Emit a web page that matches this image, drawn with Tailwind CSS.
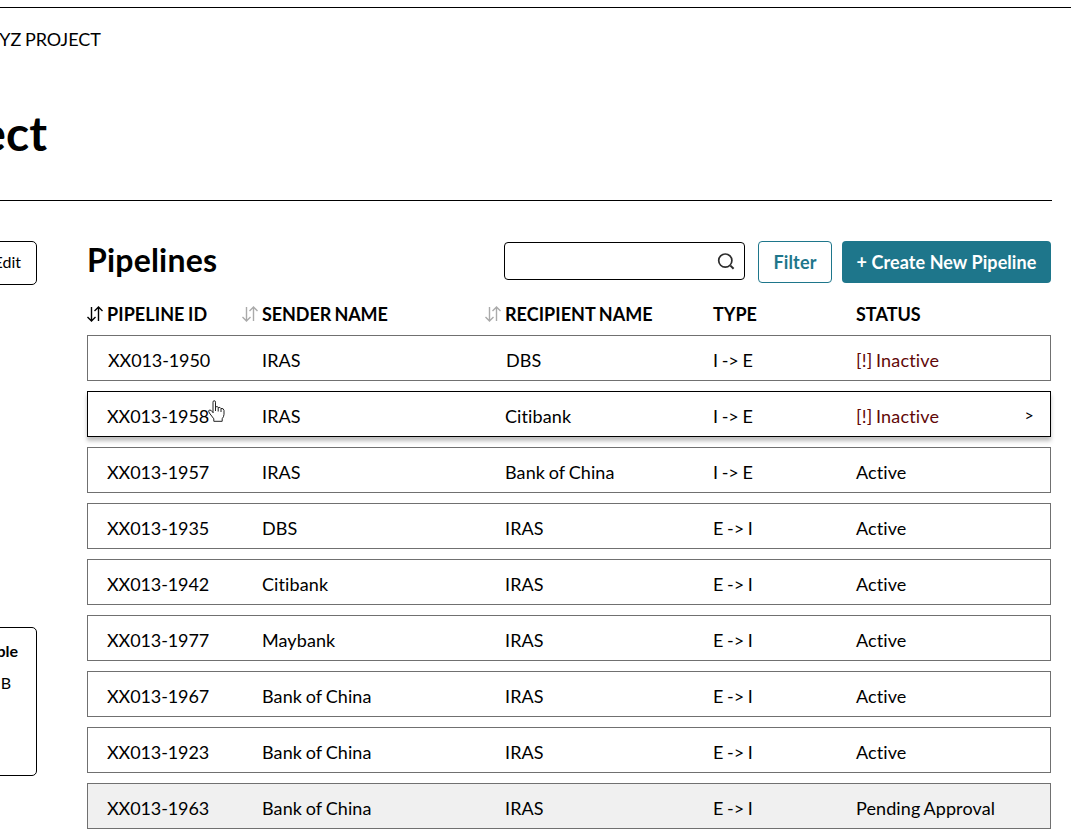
<!DOCTYPE html>
<html lang="en">
<head>
<meta charset="utf-8">
<title>Pipelines</title>
<script src="https://cdn.jsdelivr.net/npm/@tailwindcss/browser@4"></script>
</head>
<body class="bg-white text-black font-[Lato,sans-serif] text-[18px] leading-[22px] overflow-hidden [font-variant-ligatures:none] [word-spacing:-1px]">
<div class="w-[1071px] h-[836px] overflow-hidden flex flex-col whitespace-nowrap">
  <header class="mt-[7px] h-[193px] shrink-0 border-t border-black">
    <nav class="mt-5 w-[101px] flex justify-end">XYZ PROJECT</nav>
    <h1 class="mt-[54px] w-[47px] flex justify-end text-[48px] leading-[58px] font-bold">Project</h1>
  </header>
  <div class="w-[1052px] h-px shrink-0 bg-black"></div>
  <div class="mt-10 flex gap-[50px]">
    <aside class="w-[37px] shrink-0 flex flex-col items-end text-base leading-5">
      <button class="w-[74px] h-[44px] shrink-0 border border-black rounded-[5px] flex items-center justify-end pr-[15px] pb-0.5">Edit</button>
      <section class="mt-[342px] w-[300px] h-[149px] shrink-0 border border-black rounded-[5px] pr-[18px] pt-[13px] text-right">
        <div class="font-bold">Available</div>
        <div class="mt-3 pr-[7px]"><span class="[word-spacing:0]">0 B</span></div>
      </section>
    </aside>
    <main class="w-[964px] shrink-0">
      <div class="flex h-[42px]">
        <h2 class="w-[417px] text-[32px] leading-[38px] tracking-[0.2px] font-bold">Pipelines</h2>
        <div class="mt-px w-[241px] h-[38px] border border-black rounded-[4px] flex items-center justify-end pr-[9px]">
          <svg class="w-[18px] h-[18px]" viewBox="0 0 18 18" fill="none" stroke="#2b2b2b" stroke-width="1.7"><circle cx="8.3" cy="8.6" r="6.6"/><path d="M13.4 13.6l3.2 3.2" stroke-width="2"/></svg>
        </div>
        <button class="ml-[13px] w-[74px] h-[42px] border border-[#1e768b] rounded-[4px] text-[#1e768b] font-bold tracking-[0.15px]">Filter</button>
        <button class="ml-[10px] w-[209px] h-[42px] bg-[#1e768b] rounded-[4px] text-white font-bold tracking-[0.08px]">+ Create New Pipeline</button>
      </div>
      <div class="mt-5 h-[22px] grid grid-cols-[155px_243px_228px_143px_1fr] font-bold">
        <div class="flex items-center gap-1 tracking-[0.08px]"><svg class="w-4 h-4" viewBox="0 0 16 16" fill="none" stroke="#000" stroke-width="1.4"><path d="M4.5 1v14M.5 11l4 4 4-4M11.5 15v-14M7.5 5l4-4 4 4"/></svg>PIPELINE ID</div>
        <div class="flex items-center gap-1 tracking-[-0.1px]"><svg class="w-4 h-4" viewBox="0 0 16 16" fill="none" stroke="#aaa" stroke-width="1.4"><path d="M4.5 1v14M.5 11l4 4 4-4M11.5 15v-14M7.5 5l4-4 4 4"/></svg>SENDER NAME</div>
        <div class="flex items-center gap-1 tracking-[0.05px]"><svg class="w-4 h-4" viewBox="0 0 16 16" fill="none" stroke="#aaa" stroke-width="1.4"><path d="M4.5 1v14M.5 11l4 4 4-4M11.5 15v-14M7.5 5l4-4 4 4"/></svg>RECIPIENT NAME</div>
        <div>TYPE</div>
        <div>STATUS</div>
      </div>
      <div class="mt-[10px] flex flex-col gap-[10px] tracking-[0.1px]">
        <div class="h-[46px] border border-[#707070] pl-[19px] grid grid-cols-[155px_243px_208px_143px_1fr] items-center pt-1"><span class="pl-px tracking-[-0.1px]">XX013-1950</span><span>IRAS</span><span class="pl-px">DBS</span><span class="tracking-normal">I -&gt; E</span><span class="text-[#610808] tracking-[0.15px]">[!] Inactive</span></div>
        <div class="relative h-[46px] border border-black shadow-[0_4px_4px_rgba(0,0,0,0.25)] pl-[19px] grid grid-cols-[155px_243px_208px_143px_1fr] items-center pt-1"><span class="tracking-[-0.1px]">XX013-1958</span><span>IRAS</span><span>Citibank</span><span class="tracking-normal">I -&gt; E</span><span class="text-[#610808] tracking-[0.15px] flex justify-between pr-4">[!] Inactive<b class="text-black font-normal text-base leading-5">&gt;</b></span>
          <svg class="absolute left-[120px] top-[8px] w-[17px] h-[22px]" viewBox="0 0 17 22" fill="#fff" stroke="#222" stroke-width="1"><path d="M5 13V2.2Q5 .7 6.2 .7T7.5 2.2V7Q9.5 5.8 10.2 7.5Q12.3 6.8 13 8.5Q15.6 8 16 10.3V14.3Q15.8 17 14.2 18.7V21.3H5.8V18.8L1.4 13Q-.2 10.7 1.4 10Q3 9.5 5 12.5M7.5 7v4M10.2 7.5v4M13 8.5v3.5"/></svg>
        </div>
        <div class="h-[46px] border border-[#707070] pl-[19px] grid grid-cols-[155px_243px_208px_143px_1fr] items-center pt-1"><span class="tracking-[-0.1px]">XX013-1957</span><span>IRAS</span><span>Bank of China</span><span class="tracking-normal">I -&gt; E</span><span>Active</span></div>
        <div class="h-[46px] border border-[#707070] pl-[19px] grid grid-cols-[155px_243px_208px_143px_1fr] items-center pt-1"><span class="tracking-[-0.1px]">XX013-1935</span><span>DBS</span><span>IRAS</span><span class="tracking-normal">E -&gt; I</span><span>Active</span></div>
        <div class="h-[46px] border border-[#707070] pl-[19px] grid grid-cols-[155px_243px_208px_143px_1fr] items-center pt-1"><span class="tracking-[-0.1px]">XX013-1942</span><span>Citibank</span><span>IRAS</span><span class="tracking-normal">E -&gt; I</span><span>Active</span></div>
        <div class="h-[46px] border border-[#707070] pl-[19px] grid grid-cols-[155px_243px_208px_143px_1fr] items-center pt-1"><span class="tracking-[-0.1px]">XX013-1977</span><span>Maybank</span><span>IRAS</span><span class="tracking-normal">E -&gt; I</span><span>Active</span></div>
        <div class="h-[46px] border border-[#707070] pl-[19px] grid grid-cols-[155px_243px_208px_143px_1fr] items-center pt-1"><span class="tracking-[-0.1px]">XX013-1967</span><span>Bank of China</span><span>IRAS</span><span class="tracking-normal">E -&gt; I</span><span>Active</span></div>
        <div class="h-[46px] border border-[#707070] pl-[19px] grid grid-cols-[155px_243px_208px_143px_1fr] items-center pt-1"><span class="tracking-[-0.1px]">XX013-1923</span><span>Bank of China</span><span>IRAS</span><span class="tracking-normal">E -&gt; I</span><span>Active</span></div>
        <div class="h-[46px] border border-[#707070] bg-[#f0f0f0] pl-[19px] grid grid-cols-[155px_243px_208px_143px_1fr] items-center pt-1"><span class="tracking-[-0.1px]">XX013-1963</span><span>Bank of China</span><span>IRAS</span><span class="tracking-normal">E -&gt; I</span><span>Pending Approval</span></div>
      </div>
    </main>
  </div>
</div>
</body>
</html>
